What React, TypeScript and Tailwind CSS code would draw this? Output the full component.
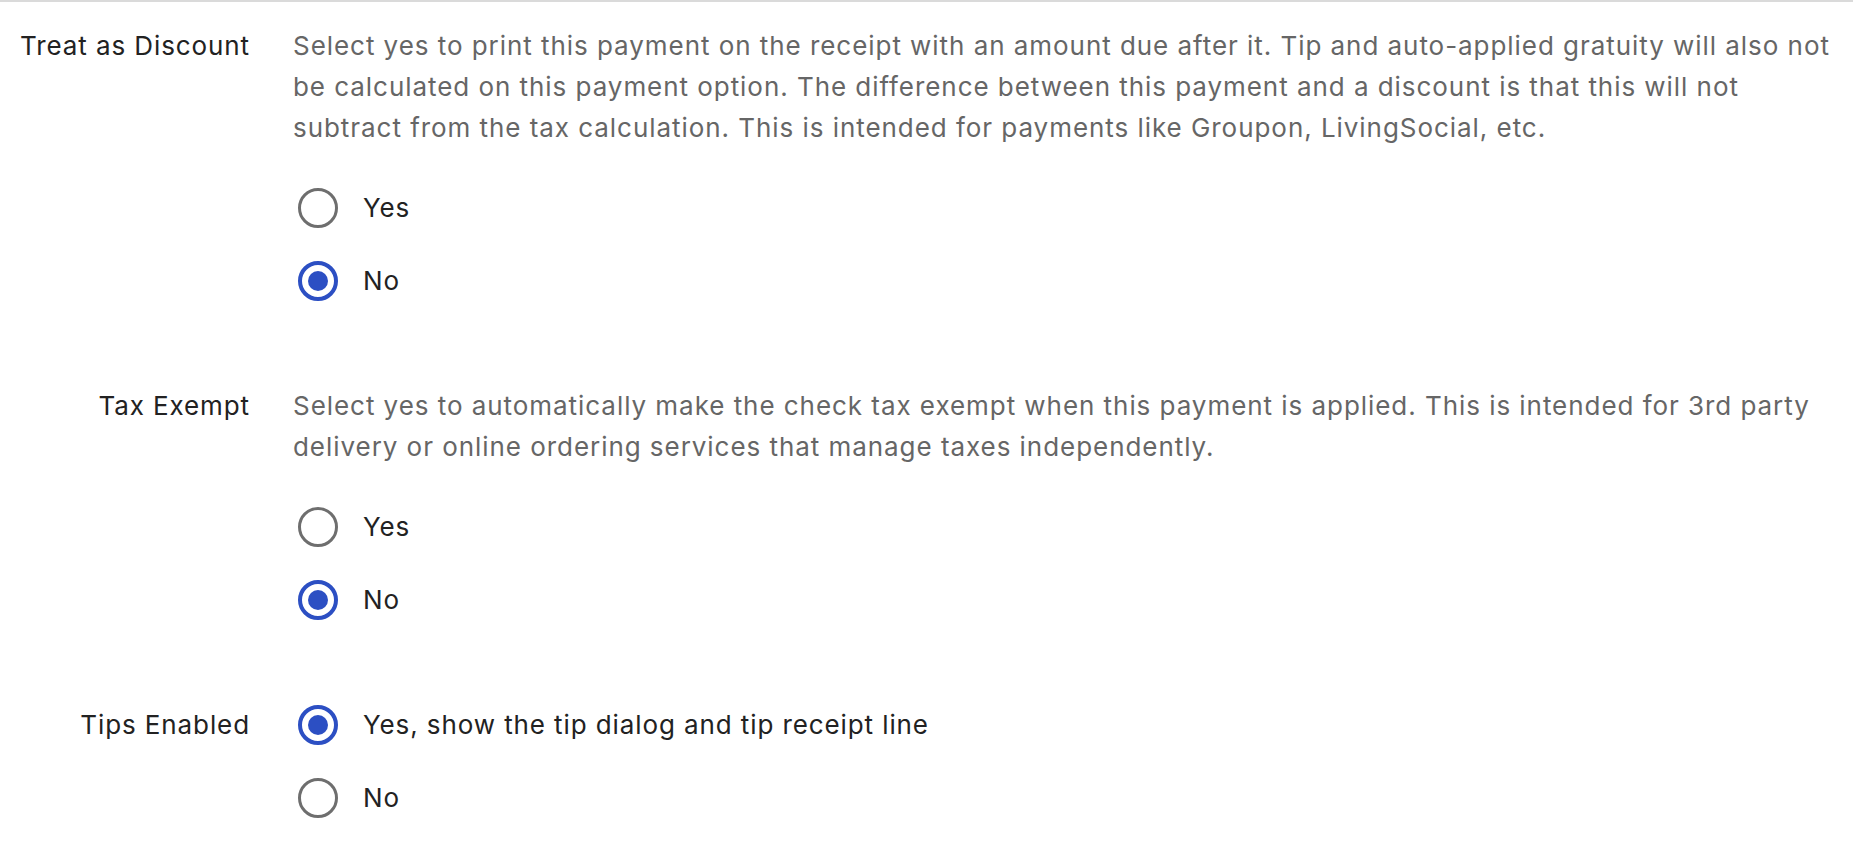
import React, { useState } from 'react';

const font = { fontFamily: 'Inter, "Liberation Sans", sans-serif' };

type Option = { value: string; label: string };

const Radio = ({ checked, label, onSelect }: { checked: boolean; label: string; onSelect: () => void }) => (
  <label className="flex items-center h-[41px] cursor-pointer" onClick={onSelect}>
    {checked ? (
      <span className="ml-[5px] w-[40px] h-[40px] rounded-full border-4 border-[#2c4fc3] flex items-center justify-center shrink-0">
        <span className="w-[20px] h-[20px] rounded-full bg-[#2c4fc3]" />
      </span>
    ) : (
      <span className="ml-[5px] w-[40px] h-[40px] rounded-full border-[3px] border-[#6e6e6e] shrink-0" />
    )}
    <span className="ml-[25px] text-[26px] tracking-[0.9px] text-[#222222]">{label}</span>
  </label>
);

const RadioGroup = ({ options, value, onChange }: { options: Option[]; value: string; onChange: (v: string) => void }) => (
  <div className="flex flex-col gap-[32px]">
    {options.map((o) => (
      <Radio key={o.value} checked={value === o.value} label={o.label} onSelect={() => onChange(o.value)} />
    ))}
  </div>
);

const Setting = ({ label, description, children }: { label: string; description?: string; children: React.ReactNode }) => (
  <div className="flex">
    <div className="w-[250px] shrink-0 text-right text-[26px] leading-[41px] tracking-[0.9px] text-[#222222]">{label}</div>
    <div className="ml-[43px] flex-1">
      {description && (
        <p className="text-[26px] leading-[41px] tracking-[0.95px] text-[#666666] mb-[39px]">{description}</p>
      )}
      {children}
    </div>
  </div>
);

const yesNo: Option[] = [
  { value: 'yes', label: 'Yes' },
  { value: 'no', label: 'No' },
];

export default function App() {
  const [discount, setDiscount] = useState('no');
  const [taxExempt, setTaxExempt] = useState('no');
  const [tips, setTips] = useState('yes');

  return (
    <div className="min-h-screen bg-white border-t-2 border-[#dadada]" style={font}>
      <div className="pt-[23px] flex flex-col gap-[84px]">
        <Setting
          label="Treat as Discount"
          description="Select yes to print this payment on the receipt with an amount due after it. Tip and auto-applied gratuity will also not be calculated on this payment option. The difference between this payment and a discount is that this will not subtract from the tax calculation. This is intended for payments like Groupon, LivingSocial, etc."
        >
          <RadioGroup options={yesNo} value={discount} onChange={setDiscount} />
        </Setting>
        <Setting
          label="Tax Exempt"
          description="Select yes to automatically make the check tax exempt when this payment is applied. This is intended for 3rd party delivery or online ordering services that manage taxes independently."
        >
          <RadioGroup options={yesNo} value={taxExempt} onChange={setTaxExempt} />
        </Setting>
        <Setting label="Tips Enabled">
          <RadioGroup
            options={[
              { value: 'yes', label: 'Yes, show the tip dialog and tip receipt line' },
              { value: 'no', label: 'No' },
            ]}
            value={tips}
            onChange={setTips}
          />
        </Setting>
      </div>
    </div>
  );
}
